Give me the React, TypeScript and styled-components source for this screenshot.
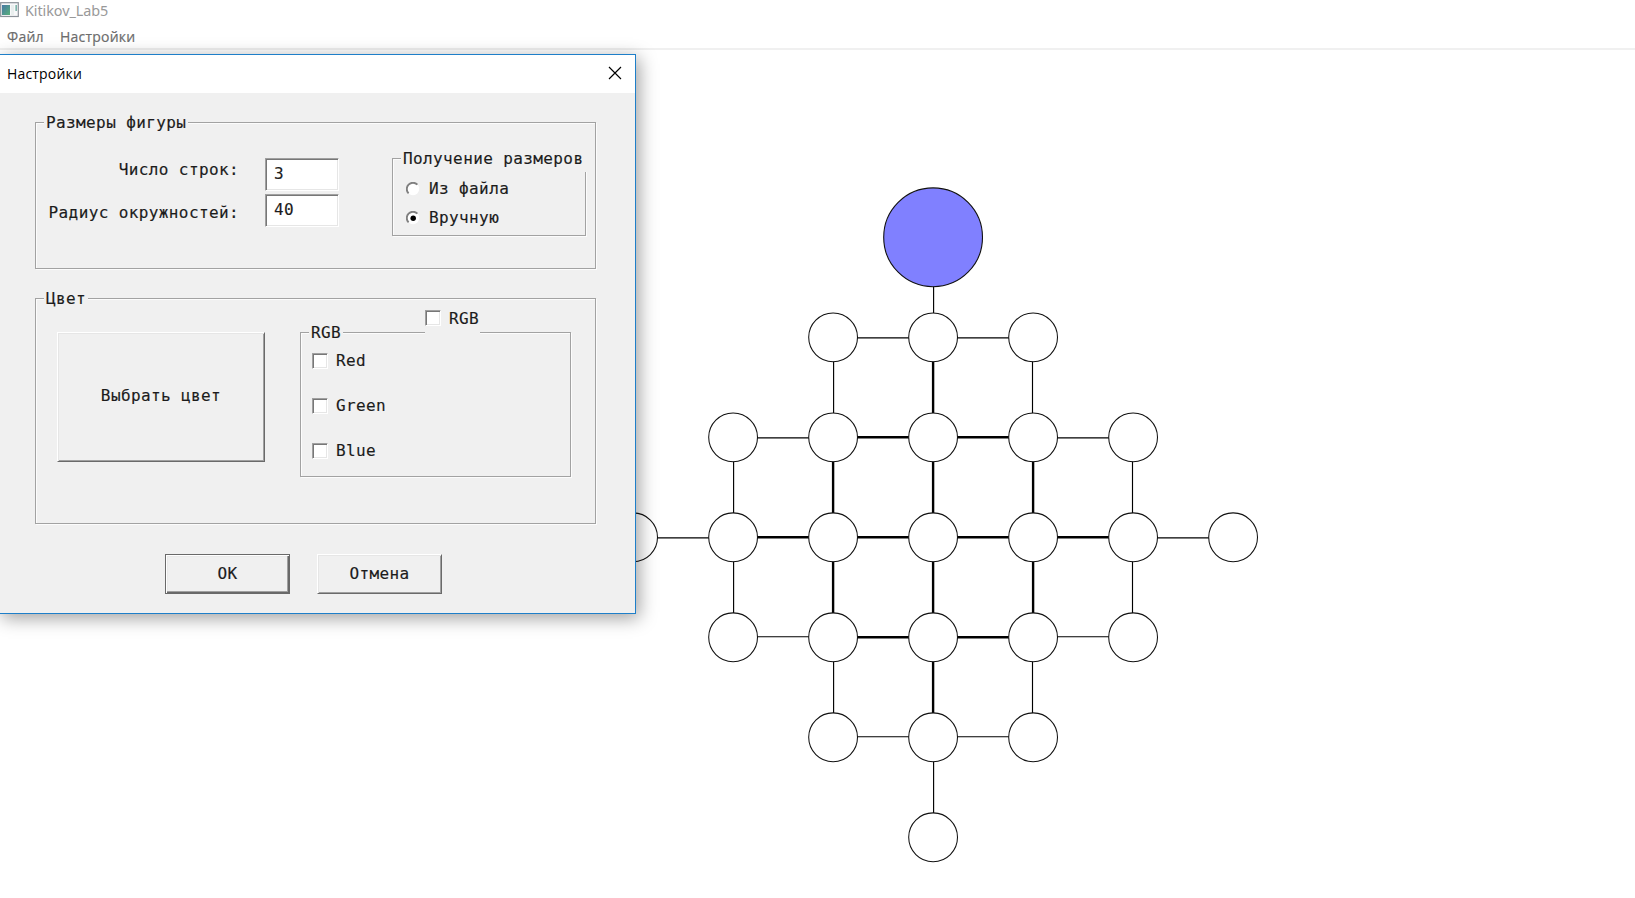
import React from 'react';
import styled, { createGlobalStyle, css } from 'styled-components';

const GlobalStyle = createGlobalStyle`
  *, *::before, *::after { box-sizing: border-box; }
  html, body { margin: 0; padding: 0; background: #fff; overflow: hidden; }
`;

const Window = styled.div`
  position: relative;
  display: flex;
  flex-direction: column;
  width: 1635px;
  height: 898px;
  overflow: hidden;
  background: #fff;
  font-family: 'Open Sans', sans-serif;
`;

const TitleBar = styled.header`
  display: flex;
  align-items: center;
  height: 20px;
  gap: 6px;
  color: #999;
  font-family: 'Noto Sans', sans-serif;
  font-size: 14.4px;
  letter-spacing: -0.08px;
`;

const MenuBar = styled.nav`
  display: flex;
  align-items: center;
  height: 30px;
  padding: 5px 0 0 7px;
  gap: 17px;
  border-bottom: 2px solid #f0f0f0;
  color: #6d6d6d;
  font-size: 14px;
  -webkit-text-stroke: 0.2px #6d6d6d;
`;

const MenuItem = styled.span<{ $width: number }>`
  width: ${(p) => p.$width}px;
  white-space: nowrap;
  letter-spacing: 0.22px;
`;

const Canvas = styled.main`
  flex: 1;
  line-height: 0;
`;

const Dialog = styled.section`
  position: absolute;
  left: -1px;
  top: 54px;
  width: 637px;
  height: 560px;
  display: flex;
  flex-direction: column;
  border: 1px solid #1e7fc9;
  background: #f0f0f0;
  box-shadow: 3px 4px 17px rgba(0, 0, 0, 0.38);
`;

const DialogTitle = styled.div`
  display: flex;
  align-items: center;
  justify-content: space-between;
  height: 38px;
  padding: 0 13px 2px 7px;
  background: #fff;
  color: #000;
  font-size: 14px;
  letter-spacing: 0.18px;
`;

const DialogBody = styled.div`
  flex: 1;
  display: flex;
  flex-direction: column;
  padding: 29px 0 0 35px;
  color: #1c1c1c;
  font-family: 'DejaVu Sans Mono', monospace;
  font-size: 16px;
  line-height: 20px;
  letter-spacing: 0.39px;
  white-space: nowrap;
  -webkit-text-stroke: 0.15px #1c1c1c;
`;

const Group = styled.div<{ $w: number; $h: number }>`
  width: ${(p) => p.$w}px;
  height: ${(p) => p.$h}px;
  flex: none;
  border: 1px solid #a2a2a2;
  box-shadow: 1px 1px 0 #fcfcfc, inset 1px 1px 0 #fcfcfc;
`;

const Legend = styled.div`
  width: fit-content;
  height: 20px;
  margin: -10px 0 0 8px;
  padding: 0 2px;
  background: #f0f0f0;
`;

const WideLegend = styled(Legend)`
  height: 23px;
  width: 186px;
  padding-left: 2px;
`;

const SizeRow = styled.div`
  display: flex;
  align-items: flex-start;
`;

const Labels = styled.div`
  display: flex;
  flex-direction: column;
  align-items: flex-end;
  gap: 23px;
  width: 203px;
  padding-top: 27px;
`;

const Fields = styled.div`
  display: flex;
  flex-direction: column;
  gap: 3px;
  margin: 25px 53px 0 26px;
`;

const sunken = css`
  border: 1px solid;
  border-color: #a0a0a0 #fff #fff #a0a0a0;
  box-shadow: inset 1px 1px 0 #777, inset -1px -1px 0 #e6e6e6;
  background: #fff;
`;

const Field = styled.input`
  ${sunken}
  width: 74px;
  height: 33px;
  padding: 0 0 3px 8px;
  border-radius: 0;
  outline: none;
  color: #1c1c1c;
  font: inherit;
  letter-spacing: inherit;
`;

const SourceGroup = styled(Group)`
  margin-top: 25px;
`;

const Options = styled.div`
  display: flex;
  flex-direction: column;
  gap: 9px;
  padding: 7px 0 0 13px;
`;

const Option = styled.label<{ $gap?: number }>`
  display: flex;
  align-items: center;
  gap: ${(p) => p.$gap ?? 8}px;
  height: 20px;
`;

const ColorGroup = styled(Group)`
  margin-top: 29px;
`;

const ColorRow = styled.div`
  display: flex;
  align-items: flex-start;
  padding: 2px 0 0 21px;
`;

const raised = css`
  border: 1px solid;
  border-color: #fff #6a6a6a #6a6a6a #fff;
  box-shadow: inset 1px 1px 0 #e6e6e6, inset -1px -1px 0 #a0a0a0;
`;

const Button = styled.button<{ $w: number; $h: number; $default?: boolean }>`
  ${raised}
  width: ${(p) => p.$w}px;
  height: ${(p) => p.$h}px;
  padding: 0;
  border-radius: 0;
  background: #f0f0f0;
  color: inherit;
  font: inherit;
  letter-spacing: inherit;
  ${(p) =>
    p.$default &&
    css`
      border-color: #696969;
      box-shadow: inset 1px 1px 0 #fff, inset -1px -1px 0 #696969, inset -2px -2px 0 #a0a0a0,
        inset 2px 2px 0 #e9e9e9;
    `}
`;

const PickButton = styled(Button)`
  margin-top: 21px;
  padding-bottom: 2px;
`;

const Channels = styled.div`
  display: flex;
  flex-direction: column;
  margin-left: 35px;
`;

const ChannelToggle = styled.label`
  position: relative;
  z-index: 1;
  display: flex;
  align-items: flex-start;
  gap: 8px;
  width: 55px;
  height: 26px;
  margin: -2px 0 -3px 125px;
  background: #f0f0f0;
`;

const ChannelList = styled.div`
  display: flex;
  flex-direction: column;
  gap: 25px;
  padding: 8px 0 0 11px;
`;

const Box = styled.span`
  ${sunken}
  width: 16px;
  height: 16px;
  flex: none;
`;

const ToggleBox = styled(Box)`
  margin-top: 1px;
`;

const Actions = styled.div`
  display: flex;
  gap: 27px;
  padding: 30px 0 0 130px;
`;

function AppIcon() {
  return (
    <svg width="19" height="16" viewBox="0 0 19 16">
      <defs>
        <linearGradient id="pane" x1="0" y1="0" x2="1" y2="1">
          <stop offset="0" stopColor="#4778a5" />
          <stop offset="1" stopColor="#58b07a" />
        </linearGradient>
      </defs>
      <rect x="0.7" y="0.7" width="17.6" height="13.8" fill="#f7f8f9" stroke="#8c9299" strokeWidth="1.2" />
      <rect x="2" y="3" width="8" height="10" fill="url(#pane)" />
      <rect x="11" y="3" width="3" height="10" fill="#e9eeee" />
      <rect x="15.5" y="3" width="1.3" height="6" fill="#60a397" />
    </svg>
  );
}

function CloseIcon() {
  return (
    <svg width="14" height="14" viewBox="0 0 14 14">
      <path d="M1 1L13 13M13 1L1 13" stroke="#000" strokeWidth="1.15" />
    </svg>
  );
}

function Radio({ checked }: { checked?: boolean }) {
  return (
    <svg width="14" height="14" viewBox="0 0 14 14">
      <circle cx="7" cy="7" r="6.2" fill="#fff" />
      <path d="M2.6 11.4A6.1 6.1 0 0 1 11.4 2.6" fill="none" stroke="#808080" strokeWidth="1.9" />
      {checked && <circle cx="7.2" cy="7.2" r="2.7" fill="#000" />}
    </svg>
  );
}

const CX = 933.1;
const CY = 537.3;
const STEP = 100;
const RADIUS = 24.4;

type Edge = { x1: number; y1: number; x2: number; y2: number; thick: boolean };

const nodes: { x: number; y: number }[] = [];
const edges: Edge[] = [];
for (let r = -3; r <= 3; r++) {
  for (let c = -3; c <= 3; c++) {
    const d = Math.abs(r) + Math.abs(c);
    if (d > 3) continue;
    const x = CX + c * STEP;
    const y = CY + r * STEP;
    if (r > -3) nodes.push({ x, y });
    const right = Math.abs(r) + Math.abs(c + 1);
    const down = Math.abs(r + 1) + Math.abs(c);
    if (right <= 3) {
      const thick = Math.max(d, right) < 3;
      const ly = thick ? y : r > 0 ? y - 0.6 : y + 0.6;
      edges.push({ x1: x, y1: ly, x2: x + STEP, y2: ly, thick });
    }
    if (down <= 3) {
      const thick = Math.max(d, down) < 3;
      const lx = thick ? x : c > 0 ? x - 0.6 : x + 0.5;
      edges.push({ x1: lx, y1: y, x2: lx, y2: y + STEP, thick });
    }
  }
}

function Figure() {
  return (
    <svg width="1635" height="848" viewBox="0 50 1635 848">
      {edges.map((e, i) => (
        <line
          key={i}
          x1={e.x1}
          y1={e.y1}
          x2={e.x2}
          y2={e.y2}
          stroke="#000"
          strokeWidth={e.thick ? 2.4 : 1.15}
        />
      ))}
      {nodes.map((n, i) => (
        <circle key={i} cx={n.x} cy={n.y} r={RADIUS} fill="#fff" stroke="#111" strokeWidth="1.05" />
      ))}
      <circle cx={CX} cy={CY - 3 * STEP} r="49.4" fill="#8080ff" stroke="#111" strokeWidth="1.1" />
    </svg>
  );
}

export default function App() {
  return (
    <Window>
      <GlobalStyle />
      <TitleBar>
        <AppIcon />
        <span>Kitikov_Lab5</span>
      </TitleBar>
      <MenuBar>
        <MenuItem $width={36}>Файл</MenuItem>
        <MenuItem $width={76}>Настройки</MenuItem>
      </MenuBar>
      <Canvas>
        <Figure />
      </Canvas>
      <Dialog>
        <DialogTitle>
          <span>Настройки</span>
          <CloseIcon />
        </DialogTitle>
        <DialogBody>
          <Group $w={561} $h={147}>
            <Legend>Размеры фигуры</Legend>
            <SizeRow>
              <Labels>
                <span>Число строк:</span>
                <span>Радиус окружностей:</span>
              </Labels>
              <Fields>
                <Field defaultValue="3" />
                <Field defaultValue="40" />
              </Fields>
              <SourceGroup $w={194} $h={78}>
                <WideLegend>Получение размеров</WideLegend>
                <Options>
                  <Option $gap={9}>
                    <Radio />
                    Из файла
                  </Option>
                  <Option $gap={9}>
                    <Radio checked />
                    Вручную
                  </Option>
                </Options>
              </SourceGroup>
            </SizeRow>
          </Group>
          <ColorGroup $w={561} $h={226}>
            <Legend>Цвет</Legend>
            <ColorRow>
              <PickButton $w={208} $h={130}>
                Выбрать цвет
              </PickButton>
              <Channels>
                <ChannelToggle>
                  <ToggleBox />
                  RGB
                </ChannelToggle>
                <Group $w={271} $h={145}>
                  <Legend>RGB</Legend>
                  <ChannelList>
                    {['Red', 'Green', 'Blue'].map((name) => (
                      <Option key={name}>
                        <Box />
                        {name}
                      </Option>
                    ))}
                  </ChannelList>
                </Group>
              </Channels>
            </ColorRow>
          </ColorGroup>
          <Actions>
            <Button $w={125} $h={40} $default>
              OK
            </Button>
            <Button $w={125} $h={40}>
              Отмена
            </Button>
          </Actions>
        </DialogBody>
      </Dialog>
    </Window>
  );
}
